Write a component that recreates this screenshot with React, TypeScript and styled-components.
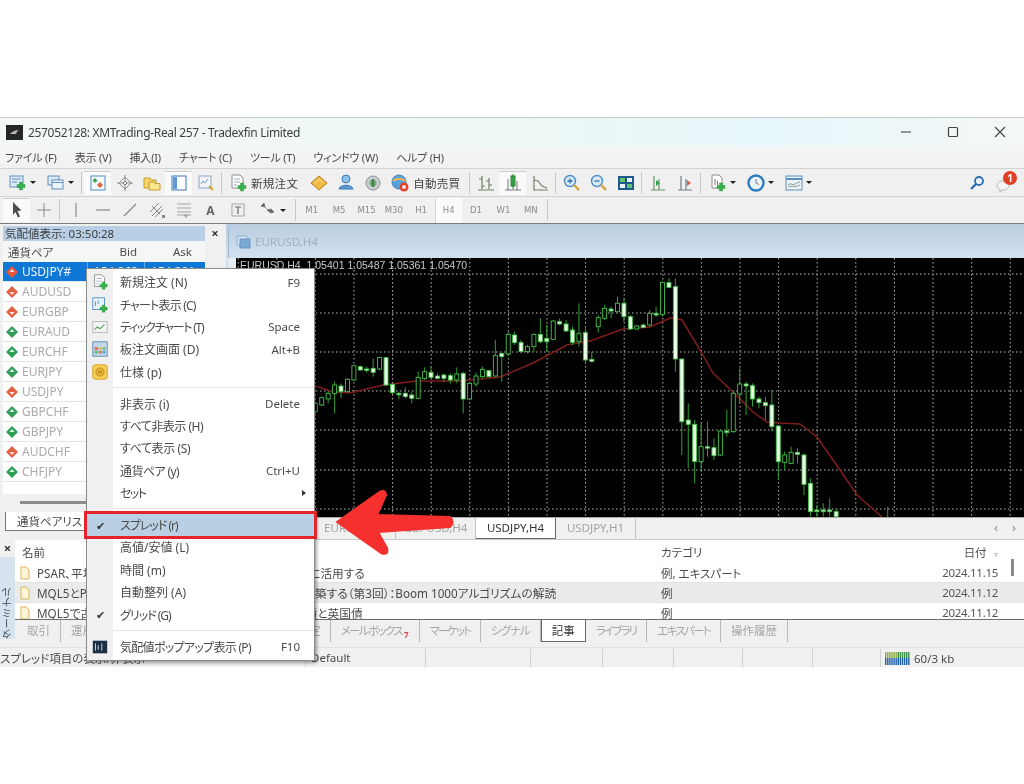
import React from "react";
import styled, { createGlobalStyle } from "styled-components";

const GlobalStyle = createGlobalStyle`
  html, body {
    margin: 0;
    padding: 0;
    background: #ffffff;
  }
  * {
    box-sizing: border-box;
  }
`;

const FONT = `"Noto Sans", "Noto Sans CJK JP", sans-serif`;

// [bodyTop, bodyBottom, wickTop, wickBottom, filled], y measured at 3x from y=250
const CANDLES: [number, number, number, number, number][] = [
  [460, 485, 455, 495, 0], [443, 465, 440, 468, 0], [430, 447, 425, 460, 0], [405, 430, 395, 490, 0],
  [408, 425, 400, 445, 1], [388, 425, 385, 428, 0], [347, 390, 345, 392, 0], [350, 360, 347, 362, 1],
  [357, 360, 350, 368, 1], [355, 367, 325, 380, 1], [322, 357, 320, 360, 0], [323, 405, 321, 408, 1],
  [403, 428, 400, 432, 1], [430, 433, 425, 448, 1], [430, 440, 412, 445, 1], [435, 445, 425, 460, 1],
  [382, 445, 365, 448, 0], [365, 385, 352, 390, 0], [367, 382, 350, 385, 1], [378, 385, 370, 388, 1],
  [375, 385, 370, 395, 1], [377, 390, 370, 400, 1], [372, 390, 352, 400, 0], [370, 447, 365, 490, 1],
  [400, 447, 398, 450, 0], [378, 402, 368, 410, 0], [358, 380, 350, 385, 0], [362, 380, 360, 382, 1],
  [317, 378, 270, 380, 0], [310, 320, 310, 395, 1], [253, 312, 245, 318, 0], [255, 278, 245, 285, 1],
  [277, 305, 270, 310, 1], [290, 305, 285, 310, 0], [253, 290, 250, 305, 0], [253, 275, 205, 280, 1],
  [265, 275, 225, 305, 1], [213, 268, 210, 270, 0], [215, 222, 205, 225, 1], [222, 243, 210, 245, 1],
  [240, 277, 230, 285, 1], [250, 275, 160, 290, 0], [248, 330, 235, 335, 1], [328, 334, 305, 338, 1],
  [203, 230, 195, 248, 0], [175, 205, 165, 210, 0], [177, 183, 170, 205, 1], [160, 185, 140, 190, 0],
  [160, 200, 145, 215, 1], [200, 237, 195, 240, 1], [228, 237, 225, 240, 0], [225, 232, 220, 235, 1],
  [190, 225, 180, 230, 0], [190, 195, 170, 200, 1], [97, 193, 95, 200, 0], [98, 112, 85, 112, 1],
  [110, 327, 85, 365, 1], [327, 515, 327, 615, 1], [510, 523, 460, 655, 1], [523, 635, 510, 700, 1],
  [590, 635, 520, 660, 0], [590, 594, 515, 620, 1], [593, 617, 565, 630, 1], [543, 615, 541, 618, 0],
  [543, 546, 480, 560, 1], [430, 545, 420, 548, 0], [402, 432, 355, 460, 0], [402, 408, 395, 495, 1],
  [407, 447, 400, 470, 1], [447, 458, 440, 475, 1], [458, 467, 440, 510, 1], [465, 530, 420, 545, 1],
  [528, 635, 525, 690, 1], [615, 637, 605, 660, 0], [607, 640, 590, 642, 0], [607, 613, 595, 640, 1],
  [615, 703, 610, 735, 1], [700, 785, 685, 800, 1], [780, 785, 765, 800, 1], [780, 785, 760, 800, 1],
  [780, 785, 745, 800, 1], [785, 800, 775, 800, 1],
];

const MA_LINE =
  "M313 385 L333 392 L350 393 L383 385 L417 381 L460 381 L500 377 L533 363 L567 345 L590 341 L623 329 L650 327 L670 318 L675 318 L682 320 L700 350 L713 373 L733 392 L753 412 L767 422 L780 423 L800 424 L817 437 L840 470 L857 495 L882 517";

const chartY = (v: number) => 250 + v / 3;

const PriceChart = () => (
  <ChartSvg viewBox="236 258 788 259">
    <rect x="236" y="258" width="788" height="259" fill="#000" />
    {Array.from({ length: 21 }, (_, i) => (
      <line key={i} x1={238.2 + i * 38.6} x2={238.2 + i * 38.6} y1="258" y2="517" stroke="#b9b9b9" strokeWidth="1" strokeDasharray="1.5 2.5" />
    ))}
    {[274, 313, 352, 391, 430, 470, 509].map((y) => (
      <line key={y} x1="236" x2="1024" y1={y} y2={y} stroke="#b9b9b9" strokeWidth="1" strokeDasharray="1.5 2.5" />
    ))}
    <path d={MA_LINE} fill="none" stroke="#7f1d1d" strokeWidth="1.5" />
    {CANDLES.map(([top, bottom, wickTop, wickBottom, filled], i) => {
      const x = 315.3 + i * 6.43;
      return (
        <g key={i}>
          <line x1={x} x2={x} y1={chartY(wickTop)} y2={chartY(wickBottom)} stroke="#2f9e33" strokeWidth="1" />
          <rect
            x={x - 2}
            y={chartY(top)}
            width="4"
            height={Math.max(1.5, (bottom - top) / 3)}
            fill={filled ? "#e9ffe6" : "#000"}
            stroke="#43c24a"
            strokeWidth="0.9"
          />
        </g>
      );
    })}
    <line x1="887.7" x2="887.7" y1="507" y2="517" stroke="#2f9e33" strokeWidth="1" />
  </ChartSvg>
);

const Svg = ({ children, size = 20 }: { children: React.ReactNode; size?: number }) => (
  <svg width={size} height={size} viewBox="0 0 20 20">
    {children}
  </svg>
);

const Plus = ({ x = 12, y = 13 }: { x?: number; y?: number }) => (
  <path d={`M${x - 1.5} ${y - 4}h3v2.5h2.5v3h-2.5v2.5h-3v-2.5h-2.5v-3h2.5z`} fill="#35b34a" stroke="#1f8a35" strokeWidth=".4" />
);

const icons: Record<string, React.ReactNode> = {
  newChart: (
    <>
      <rect x="2" y="3" width="13" height="11" fill="#dce9f6" stroke="#5f8fbd" />
      <path d="M4 6h9M4 9h5" stroke="#5f8fbd" />
      <Plus x={13} y={13} />
    </>
  ),
  profile: (
    <>
      <rect x="2" y="3" width="11" height="9" fill="#dce9f6" stroke="#5f8fbd" />
      <rect x="6" y="7" width="11" height="9" fill="#eef4fb" stroke="#5f8fbd" />
      <path d="M6 9.5h11" stroke="#5f8fbd" />
    </>
  ),
  watch: (
    <>
      <rect x="3" y="3" width="14" height="14" fill="#f5f9fd" stroke="#4d8dc4" />
      <path d="M7 5l2.5 2.5L7 10 4.5 7.5z" fill="#3aa655" />
      <path d="M12 9l3 3-3 3-3-3z" fill="#e0663a" />
    </>
  ),
  navigator: (
    <>
      <path d="M10 4l6 6-6 6-6-6z" fill="#f4f4f4" stroke="#8a8a8a" />
      <path d="M10 2v16M2 10h16" stroke="#8a8a8a" />
      <circle cx="10" cy="10" r="1.6" fill="#fff" stroke="#777" />
    </>
  ),
  folders: (
    <>
      <path d="M2 5h6l1 2h5v8H2z" fill="#f6d66b" stroke="#c79a2c" />
      <path d="M7 9h5l1 1.5h5V17H7z" fill="#fbe58d" stroke="#c79a2c" />
    </>
  ),
  panel: (
    <>
      <rect x="3" y="3" width="14" height="14" fill="#fff" stroke="#3a78b5" />
      <rect x="4" y="4" width="4" height="12" fill="#5b9bd5" />
    </>
  ),
  tester: (
    <>
      <rect x="3" y="3" width="12" height="12" fill="#f1f5f9" stroke="#8ea6bd" />
      <path d="M5 11l2-3 2 2 3-4" fill="none" stroke="#6b9ac4" />
      <path d="M13 13l4 4" stroke="#d8a23a" strokeWidth="2" />
    </>
  ),
  order: (
    <>
      <path d="M4 2h8l3 3v10H4z" fill="#fff" stroke="#8c8c8c" />
      <path d="M6 6h6M6 9h6M6 12h3" stroke="#9ab" />
      <Plus x={14} y={14} />
    </>
  ),
  gem: (
    <>
      <path d="M10 3l8 7-8 7-8-7z" fill="#f0b93f" stroke="#b97a1e" />
      <path d="M6 10l4-3.5 4 3.5" fill="none" stroke="#ffe9a8" />
    </>
  ),
  person: (
    <>
      <circle cx="10" cy="6" r="4" fill="#8cc0ea" stroke="#3a78b5" />
      <path d="M3 16c1-5 13-5 14 0z" fill="#5b9bd5" stroke="#3a78b5" />
    </>
  ),
  globe: (
    <>
      <circle cx="10" cy="10" r="7" fill="#c9ced3" stroke="#8b9298" />
      <circle cx="10" cy="10" r="3.5" fill="#73a874" />
      <path d="M10 6v8" stroke="#2f6f3a" strokeWidth="1.5" />
    </>
  ),
  auto: (
    <>
      <circle cx="9" cy="9" r="7" fill="#58a3dd" stroke="#3b7fb5" />
      <path d="M3 8c4-3 9-3 12 0" fill="none" stroke="#f2b552" strokeWidth="2" />
      <circle cx="14" cy="14" r="4.5" fill="#e2462f" />
      <rect x="12.4" y="12.4" width="3.2" height="3.2" fill="#fff" />
    </>
  ),
  bars: (
    <path d="M6 3v13M3 6h3M6 13h3M13 5v11M10 8h3M13 12h3M2 17h16" fill="none" stroke="#6f7f5f" strokeWidth="1.2" />
  ),
  candle: (
    <>
      <path d="M2 17h16M5 6v11M14 8v9" stroke="#777" />
      <rect x="8" y="3" width="4" height="10" fill="#4cc25a" stroke="#247a30" />
      <path d="M10 1v15" stroke="#247a30" />
    </>
  ),
  line: <path d="M4 3v14h14M4 7l4 1 4 5 5 2" fill="none" stroke="#7b7b6a" strokeWidth="1.2" />,
  zoomIn: (
    <>
      <circle cx="8" cy="8" r="5.5" fill="#d7e9f8" stroke="#4d8dc4" strokeWidth="1.4" />
      <path d="M5.5 8h5M8 5.5v5" stroke="#2f6fa8" strokeWidth="1.3" />
      <path d="M12 12l5 5" stroke="#d8a23a" strokeWidth="2.4" />
    </>
  ),
  zoomOut: (
    <>
      <circle cx="8" cy="8" r="5.5" fill="#d7e9f8" stroke="#4d8dc4" strokeWidth="1.4" />
      <path d="M5.5 8h5" stroke="#2f6fa8" strokeWidth="1.3" />
      <path d="M12 12l5 5" stroke="#d8a23a" strokeWidth="2.4" />
    </>
  ),
  tile: (
    <>
      <rect x="2" y="3" width="16" height="14" fill="#1d5a8a" />
      <rect x="4" y="5" width="5" height="4" fill="#5fc46f" />
      <rect x="11" y="5" width="5" height="4" fill="#eaf3fb" />
      <rect x="4" y="11" width="5" height="4" fill="#eaf3fb" />
      <rect x="11" y="11" width="5" height="4" fill="#5fc46f" />
    </>
  ),
  shiftEnd: (
    <>
      <path d="M3 17h14M6 3v14M11 6v11" stroke="#6f8f6f" strokeWidth="1.2" />
      <path d="M8 7l4 3-4 3z" fill="#2f9e44" />
    </>
  ),
  shiftRed: (
    <>
      <path d="M3 17h14M6 3v14M11 6v11" stroke="#6f7f8f" strokeWidth="1.2" />
      <path d="M12 7l4 3-4 3z" fill="#d8604a" />
    </>
  ),
  indicator: (
    <>
      <path d="M4 2h7l3 3v10H4z" fill="#fff" stroke="#8c8c8c" />
      <path d="M7 6v6M9.5 8v4" stroke="#777" />
      <Plus x={13} y={14} />
    </>
  ),
  clock: (
    <>
      <circle cx="10" cy="10" r="7.5" fill="#eaf3fb" stroke="#2f7dbd" strokeWidth="2.4" />
      <path d="M10 6v4l3 1.5" fill="none" stroke="#777" />
    </>
  ),
  template: (
    <>
      <rect x="2" y="3" width="16" height="14" fill="#eaf3fb" stroke="#5f8fbd" />
      <path d="M2 6h16" stroke="#5f8fbd" strokeWidth="2" />
      <path d="M4 12c3-3 4 1 7-1s3-1 5-2M4 14c4-2 7 1 12-2" fill="none" stroke="#8a9a8a" />
    </>
  ),
  cursor: <path d="M6 2l8.5 8.5-4 .5 2.5 5.5-2.2 1L8.5 12l-2.5 3z" fill="#4d4d4d" />,
  cross: <path d="M10 3v14M3 10h14" stroke="#8a8a8a" strokeWidth="1" />,
  vline: <path d="M10 3v14" stroke="#8a8a8a" strokeWidth="1.2" />,
  hline: <path d="M3 10h14" stroke="#8a8a8a" strokeWidth="1.2" />,
  trend: <path d="M4 16L16 4" stroke="#8a8a8a" strokeWidth="1.2" />,
  channel: (
    <>
      <path d="M3 12l9-9M5 16l10-10M8 17l8-8M5 6l8 8" stroke="#888" strokeWidth="1" />
      <path d="M15 15h3v3h-3z" fill="#888" />
    </>
  ),
  fibo: <path d="M3 4h14M3 8h14M3 12h14M3 15h14M10 15l2 2.5 2-2.5z" stroke="#a5a5a5" fill="#a5a5a5" strokeWidth="1" />,
  textBox: (
    <>
      <rect x="4" y="4" width="12" height="12" fill="none" stroke="#a5a5a5" />
      <path d="M7 7h6M10 7v7" stroke="#666" strokeWidth="1.2" />
    </>
  ),
  arrows: <path d="M3 6l4 1-1-4zM9 10l4 3 3-1-3-3zM6 6l3 3" fill="#666" stroke="#666" strokeWidth=".7" />,
};

const menuIcons: Record<string, React.ReactNode> = {
  order: icons.order,
  chart: (
    <>
      <rect x="2" y="2" width="13" height="13" fill="#eaf3fb" stroke="#4d8dc4" />
      <path d="M5 6v5M8 5v4" stroke="#4d8dc4" />
      <Plus x={14} y={14} />
    </>
  ),
  tick: (
    <>
      <rect x="2" y="4" width="16" height="12" fill="#f3f3f3" stroke="#b5b5b5" />
      <path d="M4 13l3-3 3 2 5-5" fill="none" stroke="#5aa364" strokeWidth="1.2" />
    </>
  ),
  depth: (
    <>
      <rect x="2" y="2" width="16" height="16" fill="#c4d7ea" stroke="#5b86ad" />
      <path d="M4 8h4v3H4z" fill="#e06b4a" />
      <path d="M9 8h3v3H9z" fill="#f0b93f" />
      <path d="M13 8h3v3h-3z" fill="#6fba6f" />
      <path d="M4 12h4v3H4z" fill="#6fba6f" />
      <path d="M9 12h3v3H9z" fill="#e06b4a" />
      <path d="M13 12h3v3h-3z" fill="#5b9bd5" />
    </>
  ),
  spec: (
    <>
      <rect x="2" y="2" width="16" height="16" rx="3" fill="#f6cf55" stroke="#d09a22" />
      <circle cx="10" cy="10" r="4.5" fill="#eab93a" stroke="#b98a20" />
      <path d="M7.5 9h5M7.5 11h5" stroke="#a87a18" />
    </>
  ),
  popup: (
    <>
      <rect x="2" y="3" width="16" height="14" fill="#1c2f45" />
      <path d="M5 6v8M8 8v5M12 6v8" stroke="#d9e6f2" />
    </>
  ),
};

type MenuEntry = {
  icon?: string;
  label?: string;
  shortcut?: string;
  checked?: boolean;
  more?: boolean;
  active?: boolean;
  tight?: number;
};

const MENU: MenuEntry[] = [
  { icon: "order", label: "新規注文 (N)", shortcut: "F9" },
  { icon: "chart", label: "チャート表示 (C)", tight: 0.8 },
  { icon: "tick", label: "ティックチャート (T)", shortcut: "Space", tight: 1.25 },
  { icon: "depth", label: "板注文画面 (D)", shortcut: "Alt+B" },
  { icon: "spec", label: "仕様 (p)" },
  {},
  { label: "非表示 (i)", shortcut: "Delete" },
  { label: "すべて非表示 (H)", tight: 0.5 },
  { label: "すべて表示 (S)", tight: 0.4 },
  { label: "通貨ペア (y)", shortcut: "Ctrl+U", tight: 0.6 },
  { label: "セット", more: true, tight: 1.6 },
  {},
  { label: "スプレッド (r)", checked: true, active: true, tight: 1 },
  { label: "高値/安値 (L)" },
  { label: "時間 (m)" },
  { label: "自動整列 (A)" },
  { label: "グリッド (G)", checked: true, tight: 1 },
  {},
  { icon: "popup", label: "気配値ポップアップ表示 (P)", shortcut: "F10", tight: 0.7 },
];

const PAIRS: [string, boolean][] = [
  ["AUDUSD", false],
  ["EURGBP", false],
  ["EURAUD", true],
  ["EURCHF", true],
  ["EURJPY", true],
  ["USDJPY", false],
  ["GBPCHF", true],
  ["GBPJPY", true],
  ["AUDCHF", false],
  ["CHFJPY", true],
];

const TERMINAL_TABS: { label: string; tight?: number; active?: boolean; mail?: boolean }[] = [
  { label: "取引" },
  { label: "運用比率" },
  { label: "口座履歴" },
  { label: "ニュース", tight: 1.8 },
  { label: "アラーム設定", tight: 1 },
  { label: "メールボックス", tight: 1.6, mail: true },
  { label: "マーケット", tight: 2 },
  { label: "シグナル", tight: 1 },
  { label: "記事", active: true },
  { label: "ライブラリ", tight: 1.8 },
  { label: "エキスパート", tight: 1.7 },
  { label: "操作履歴" },
];

const PairIcon = ({ up, light }: { up: boolean; light?: boolean }) => (
  <svg width="14" height="14" viewBox="0 0 14 14">
    <path d="M7 1l6 6-6 6-6-6z" fill={light ? "#e8543a" : up ? "#2f9e55" : "#e2603f"} />
    <path d={up ? "M7 4l2.5 3h-5z" : "M7 10L4.5 7h5z"} fill="#fff" opacity=".85" />
  </svg>
);

const Tool = ({ name, on, wide, drop }: { name: string; on?: boolean; wide?: string; drop?: boolean }) => (
  <ToolButton $on={on} $wide={wide}>
    <Svg>{icons[name]}</Svg>
    {drop && <Caret />}
  </ToolButton>
);

const Article = ({ name, category, date, odd }: { name: string; category: string; date: string; odd?: boolean }) => (
  <ArticleRow $odd={odd}>
    <ArticleName>
      <svg width="10" height="14" viewBox="0 0 10 14">
        <path d="M1 1h5l3 3v9H1z" fill="#fff6d5" stroke="#d8b45a" />
      </svg>
      {name}
    </ArticleName>
    <span>{category}</span>
    <ArticleDate>{date}</ArticleDate>
  </ArticleRow>
);

const TIMEFRAMES = ["M1", "M5", "M15", "M30", "H1", "H4", "D1", "W1", "MN"];
const STATUS_WIDTHS = [120, 105, 72, 71, 69, 70, 68];

export default function App() {
  return (
    <Page>
      <GlobalStyle />
      <Window>
        <TitleBar>
          <svg width="17" height="15" viewBox="0 0 17 15">
            <rect width="17" height="15" fill="#262626" />
            <path d="M4 9c3-3 5-4 9-4-2 1-2 2-3 4z" fill="#b5b5b5" />
          </svg>
          <TitleText>257052128: XMTrading-Real 257 - Tradexfin Limited</TitleText>
          <WindowControls>
            <svg width="12" height="12" viewBox="0 0 12 12">
              <path d="M1 6h10" stroke="#555" strokeWidth="1.2" />
            </svg>
            <svg width="12" height="12" viewBox="0 0 12 12">
              <rect x="1.5" y="1.5" width="9" height="9" rx="1" fill="none" stroke="#444" strokeWidth="1.2" />
            </svg>
            <svg width="12" height="12" viewBox="0 0 12 12">
              <path d="M1 1l10 10M11 1L1 11" stroke="#444" strokeWidth="1.2" />
            </svg>
          </WindowControls>
        </TitleBar>

        <MenuBar>
          <span>ファイル (F)</span>
          <span>表示 (V)</span>
          <span>挿入(I)</span>
          <span>チャート (C)</span>
          <span>ツール (T)</span>
          <span>ウィンドウ (W)</span>
          <span>ヘルプ (H)</span>
        </MenuBar>

        <ToolBar $height={28}>
          <Tool name="newChart" wide="38px" drop />
          <Tool name="profile" wide="38px" drop />
          <ToolSep />
          <Tool name="watch" on />
          <Tool name="navigator" />
          <Tool name="folders" />
          <Tool name="panel" on />
          <Tool name="tester" />
          <ToolSep />
          <LabelTool>
            <Svg>{icons.order}</Svg>
            新規注文
          </LabelTool>
          <Tool name="gem" />
          <Tool name="person" />
          <Tool name="globe" />
          <LabelTool>
            <Svg>{icons.auto}</Svg>
            自動売買
          </LabelTool>
          <ToolSep />
          <Tool name="bars" />
          <Tool name="candle" on />
          <Tool name="line" />
          <ToolSep />
          <Tool name="zoomIn" />
          <Tool name="zoomOut" />
          <Tool name="tile" />
          <ToolSep />
          <Tool name="shiftEnd" />
          <Tool name="shiftRed" />
          <ToolSep />
          <Tool name="indicator" wide="38px" drop />
          <Tool name="clock" wide="38px" drop />
          <Tool name="template" wide="38px" drop />
          <ToolEnd>
            <svg width="16" height="16" viewBox="0 0 16 16">
              <circle cx="10" cy="6" r="4" fill="#e8f1f9" stroke="#2f6fb0" strokeWidth="1.8" />
              <path d="M7 9l-5 5" stroke="#2f6fb0" strokeWidth="2.4" />
            </svg>
            <NoticeIcon>
              <svg width="14" height="14" viewBox="0 0 14 14">
                <path d="M7 2c3.5 0 6 2 6 4.5S10.5 11 7 11H5.5L4 13.5V10.5C2 9.5 1 8 1 6.5 1 4 3.5 2 7 2z" fill="#f4f4f4" stroke="#b5b5b5" />
              </svg>
              <Badge>1</Badge>
            </NoticeIcon>
          </ToolEnd>
        </ToolBar>

        <ToolBar $height={27}>
          <Tool name="cursor" on />
          <Tool name="cross" />
          <ToolSep />
          <Tool name="vline" />
          <Tool name="hline" />
          <Tool name="trend" />
          <Tool name="channel" />
          <Tool name="fibo" />
          <TextTool>A</TextTool>
          <Tool name="textBox" />
          <Tool name="arrows" wide="42px" drop />
          <ToolSep />
          {TIMEFRAMES.map((t) => (
            <Period key={t} $on={t === "H4"}>
              {t}
            </Period>
          ))}
          <ToolSep />
        </ToolBar>

        <Main>
          <WatchPanel>
            <WatchTitleRow>
              <WatchTitle>気配値表示: 03:50:28</WatchTitle>
              <CloseMark>×</CloseMark>
            </WatchTitleRow>
            <WatchList>
              <WatchHead>
                <span>通貨ペア</span>
                <RightCell>Bid</RightCell>
                <RightCell>Ask</RightCell>
              </WatchHead>
              <WatchRow $selected>
                <PairIcon up light />
                USDJPY#
                <SelectedQuote>154.263</SelectedQuote>
                <SelectedQuote>154.281</SelectedQuote>
              </WatchRow>
              {PAIRS.map(([pair, up]) => (
                <WatchRow key={pair}>
                  <PairIcon up={up} />
                  {pair}
                </WatchRow>
              ))}
            </WatchList>
            <WatchScroll>
              <WatchThumb />
            </WatchScroll>
            <WatchTabs>
              <WatchTab>通貨ペアリスト</WatchTab>
            </WatchTabs>
          </WatchPanel>

          <ChartArea>
            <ChartWindowTitle>
              <svg width="15" height="14" viewBox="0 0 15 14">
                <rect x="1" y="1" width="10" height="9" fill="#d5e4f2" stroke="#8db1d4" />
                <rect x="4" y="4" width="10" height="9" fill="#7ca9d4" stroke="#6a97c4" />
              </svg>
              EURUSD,H4
            </ChartWindowTitle>
            <ChartCanvas>
              <PriceChart />
              <ChartLabel>EURUSD,H4&nbsp; 1.05401 1.05487 1.05361 1.05470</ChartLabel>
            </ChartCanvas>
            <ChartTabs>
              <ChartTab>USDCHF,H4</ChartTab>
              <ChartTab>EURUSD,H4</ChartTab>
              <ChartTab>GBPUSD,H4</ChartTab>
              <ChartTab $active>USDJPY,H4</ChartTab>
              <ChartTab>USDJPY,H1</ChartTab>
              <TabScroll>
                <span>‹</span>
                <span>›</span>
              </TabScroll>
            </ChartTabs>
          </ChartArea>
        </Main>

        <Terminal>
          <TerminalSide>
            <CloseMark>×</CloseMark>
            <SideLabel>ターミナル</SideLabel>
          </TerminalSide>
          <TerminalBody>
            <ArticleTable>
              <ArticleHead>
                <ArticleHeadName>名前</ArticleHeadName>
                <span>カテゴリ</span>
                <ArticleDate>日付 &nbsp;&nbsp;<SortMark>▿</SortMark></ArticleDate>
              </ArticleHead>
              <Article name="PSAR、平均足、ディープラーニングを組み合わせた取引に活用する" category="例, エキスパート" date="2024.11.15" />
              <Article name="MQL5とPythonで最適化エキスパートアドバイザーを構築する（第3回）：Boom 1000アルゴリズムの解読" category="例" date="2024.11.12" odd />
              <Article name="MQL5で古典的な戦略を再構築する（第2回）：金、米国債と英国債" category="例" date="2024.11.12" />
              <ScrollThumb />
            </ArticleTable>
            <TerminalTabs>
              {TERMINAL_TABS.map((t) => (
                <TerminalTab key={t.label} $active={t.active} $tight={t.tight}>
                  {t.label}
                  {t.mail && <MailCount>7</MailCount>}
                </TerminalTab>
              ))}
            </TerminalTabs>
          </TerminalBody>
        </Terminal>

        <StatusBar>
          <StatusHelp>スプレッド項目の表示/非表示</StatusHelp>
          <StatusCell $width={STATUS_WIDTHS[0]}>Default</StatusCell>
          {STATUS_WIDTHS.slice(1).map((w, i) => (
            <StatusCell key={i} $width={w} />
          ))}
          <StatusTraffic>
            <svg width="25" height="13" viewBox="0 0 25 13">
              {Array.from({ length: 12 }, (_, i) => (
                <g key={i}>
                  <rect x={i * 2.1} y="0" width="1.4" height="6" fill={i < 6 ? "#8fa83a" : "#3f8f4a"} />
                  <rect x={i * 2.1} y="6" width="1.4" height="7" fill="#1f5fa8" />
                </g>
              ))}
            </svg>
            60/3 kb
          </StatusTraffic>
        </StatusBar>

        <ContextMenu>
          {MENU.map((item, i) =>
            item.label ? (
              <MenuRow key={i} $active={item.active}>
                <MenuGutter>
                  {item.icon && <Svg size={18}>{menuIcons[item.icon]}</Svg>}
                  {item.checked && <CheckMark>✔</CheckMark>}
                </MenuGutter>
                <MenuLabel $tight={item.tight}>{item.label}</MenuLabel>
                <MenuShortcut>{item.shortcut}</MenuShortcut>
                {item.more && <MoreMark />}
              </MenuRow>
            ) : (
              <MenuSeparator key={i} />
            )
          )}
        </ContextMenu>

        <RedArrow viewBox="0 0 130 75">
          <path
            d="M6 37 L47 8 Q54 3 55 10 L46 30 L119 32 Q124 37 119 42 L47 47 L56 63 Q58 71 50 68 Z"
            fill="#f5302e"
            stroke="#f5302e"
            strokeWidth="2"
            strokeLinejoin="round"
          />
        </RedArrow>
      </Window>
    </Page>
  );
}

const Page = styled.div`
  height: 784px;
  padding-top: 117px;
  background: #ffffff;
  overflow: hidden;
  font-family: ${FONT};
  font-feature-settings: "palt";
`;

const Window = styled.div`
  position: relative;
  height: 550px;
  display: flex;
  flex-direction: column;
  background: #f0f0f0;
  border-top: 1px solid #c8ccc9;
  color: #4a4a4a;
  font-size: 12px;
  overflow: hidden;
  filter: blur(0.35px);
`;

const TitleBar = styled.div`
  height: 28px;
  display: flex;
  align-items: center;
  padding-left: 6px;
  background: linear-gradient(90deg, #f3f8f5, #eff8f3 40%, #e7f6fa 75%, #f3f8f6);
`;

const TitleText = styled.span`
  margin-left: 5px;
  font-size: 12px;
  letter-spacing: -0.33px;
  color: #3f3f3f;
`;

const WindowControls = styled.div`
  margin-left: auto;
  display: flex;
  gap: 35px;
  padding-right: 18px;
`;

const MenuBar = styled.div`
  height: 22px;
  display: flex;
  align-items: center;
  gap: 18px;
  padding-left: 5px;
  font-size: 11px;
  letter-spacing: -0.2px;
  background: linear-gradient(#f4f6f5, #f1f1f1);
`;

const ToolBar = styled.div<{ $height: number }>`
  height: ${(p) => p.$height}px;
  display: flex;
  align-items: center;
  padding-left: 3px;
  background: #f0f0f0;
  border-top: 1px solid #d2d2d2;
`;

const ToolButton = styled.div<{ $on?: boolean; $wide?: string }>`
  width: ${(p) => p.$wide ?? "27px"};
  height: 24px;
  display: flex;
  align-items: center;
  justify-content: center;
  gap: 2px;
  background: ${(p) => (p.$on ? "#fafafa" : "transparent")};
  box-shadow: ${(p) => (p.$on ? "inset 0 1px 0 #cfcfcf" : "none")};
  flex-shrink: 0;
`;

const Caret = styled.span`
  width: 0;
  height: 0;
  border-left: 3px solid transparent;
  border-right: 3px solid transparent;
  border-top: 3px solid #222;
`;

const ToolSep = styled.span`
  width: 1px;
  height: 22px;
  margin: 0 2px;
  background: #c9c9c9;
  flex-shrink: 0;
`;

const LabelTool = styled.div`
  display: flex;
  align-items: center;
  gap: 3px;
  height: 24px;
  margin-left: 2px;
  padding: 0 7px 0 2px;
  font-size: 11.5px;
  letter-spacing: 0.3px;
  color: #444;
  flex-shrink: 0;
`;

const TextTool = styled.div`
  width: 27px;
  text-align: center;
  font-size: 12px;
  font-weight: 700;
  color: #666;
  flex-shrink: 0;
`;

const Period = styled.div<{ $on?: boolean }>`
  width: 27.4px;
  height: 25px;
  line-height: 25px;
  text-align: center;
  font-family: "DejaVu Sans", sans-serif;
  font-size: 8.5px;
  color: #8b8b8b;
  background: ${(p) => (p.$on ? "#fafafa" : "transparent")};
  box-shadow: ${(p) => (p.$on ? "inset 1px 0 0 #d6d6d6" : "none")};
  flex-shrink: 0;
`;

const ToolEnd = styled.div`
  margin-left: auto;
  display: flex;
  align-items: center;
  gap: 11px;
  padding-right: 8px;
`;

const NoticeIcon = styled.div`
  position: relative;
  width: 20px;
  height: 20px;
  display: flex;
  align-items: flex-end;
`;

const Badge = styled.span`
  position: absolute;
  top: -2px;
  right: -1px;
  width: 14px;
  height: 14px;
  border-radius: 50%;
  background: #df3f24;
  color: #ffffff;
  font-size: 10px;
  font-weight: 700;
  line-height: 14px;
  text-align: center;
`;

const Main = styled.div`
  height: 317px;
  display: flex;
  border-top: 1px solid #7c7c7c;
`;

const WatchPanel = styled.div`
  width: 226px;
  display: flex;
  flex-direction: column;
  padding-left: 3px;
  background: #f0f0f0;
`;

const WatchTitleRow = styled.div`
  height: 16px;
  margin-top: 1px;
  display: flex;
  align-items: center;
`;

const WatchTitle = styled.div`
  width: 202px;
  height: 15px;
  line-height: 15px;
  padding-left: 2px;
  font-size: 11.5px;
  background: #b9cfe5;
  color: #3d3d3d;
`;

const CloseMark = styled.span`
  width: 20px;
  text-align: center;
  font-size: 13px;
  font-weight: 700;
  line-height: 12px;
  color: #333;
`;

const WatchList = styled.div`
  width: 202px;
  height: 242px;
  background: #ffffff;
`;

const WatchHead = styled.div`
  height: 21px;
  display: grid;
  grid-template-columns: 83px 46px 55px;
  align-items: center;
  padding-left: 5px;
  background: #f6f6f6;
  font-size: 11.5px;
`;

const RightCell = styled.span`
  text-align: right;
`;

const WatchRow = styled.div<{ $selected?: boolean }>`
  height: 20px;
  display: flex;
  align-items: center;
  gap: 3px;
  padding-left: 2px;
  border-bottom: 1px solid #e4e4e4;
  font-size: 12px;
  background: ${(p) => (p.$selected ? "#0f78d6" : "#ffffff")};
  color: ${(p) => (p.$selected ? "#eaf4ff" : "#ababab")};
`;

const SelectedQuote = styled.span`
  width: 54px;
  height: 100%;
  line-height: 19px;
  text-align: right;
  padding-right: 3px;
  border-left: 1px solid #5fa9e8;
  &:nth-of-type(1) {
    margin-left: 13px;
  }
`;

const WatchScroll = styled.div`
  height: 29px;
  width: 202px;
  padding: 18px 6px 0 17px;
  background: linear-gradient(#ffffff 38%, #f0f0f0 38%);
`;

const WatchThumb = styled.div`
  width: 100%;
  height: 3px;
  background: #8d8d8d;
`;

const WatchTabs = styled.div`
  height: 22px;
  padding-left: 2px;
`;

const WatchTab = styled.div`
  width: 100px;
  height: 19px;
  line-height: 19px;
  padding-left: 11px;
  background: #ffffff;
  border-left: 1px solid #777;
  border-bottom: 1px solid #777;
  font-size: 11.5px;
  white-space: nowrap;
`;

const ChartArea = styled.div`
  flex: 1;
  display: flex;
  flex-direction: column;
  background: linear-gradient(#b9cde0, #cfdfee 30px);
`;

const ChartWindowTitle = styled.div`
  height: 33px;
  margin-left: 2px;
  margin-top: 1px;
  display: flex;
  align-items: center;
  gap: 4px;
  padding-left: 7px;
  border-left: 1px solid #a5b7c9;
  border-top-left-radius: 5px;
  font-size: 11.5px;
  color: #9fb0c1;
`;

const ChartCanvas = styled.div`
  position: relative;
  height: 259px;
  margin-left: 2px;
  padding-left: 8px;
  background: #e9eef3;
`;

const ChartSvg = styled.svg`
  display: block;
  width: 788px;
  height: 259px;
`;

const ChartLabel = styled.div`
  position: absolute;
  left: 12px;
  top: 1px;
  font-family: "Liberation Sans", sans-serif;
  font-size: 10.5px;
  color: #c9c9c9;
  white-space: nowrap;
`;

const ChartTabs = styled.div`
  height: 23px;
  display: flex;
  padding-left: 10px;
  background: #f0f0f0;
  border-top: 1px solid #a9a9a9;
  border-bottom: 1px solid #c9c9c9;
`;

const ChartTab = styled.div<{ $active?: boolean }>`
  width: 80px;
  text-align: center;
  line-height: 20px;
  font-size: 11.5px;
  color: ${(p) => (p.$active ? "#333" : "#a3a3a3")};
  background: ${(p) => (p.$active ? "#ffffff" : "transparent")};
  border-right: 1px solid ${(p) => (p.$active ? "#666" : "#c2c2c2")};
  border-bottom: ${(p) => (p.$active ? "1px solid #666" : "none")};
`;

const TabScroll = styled.div`
  margin-left: auto;
  display: flex;
  gap: 14px;
  padding-right: 8px;
  font-size: 13px;
  line-height: 19px;
  color: #8a8a8a;
`;

const Terminal = styled.div`
  height: 107px;
  display: flex;
  background: #f0f0f0;
`;

const TerminalSide = styled.div`
  width: 15px;
  display: flex;
  flex-direction: column;
  align-items: center;
  padding-top: 2px;
  gap: 3px;
`;

const SideLabel = styled.div`
  width: 15px;
  height: 82px;
  writing-mode: vertical-rl;
  transform: rotate(180deg);
  background: #d6e3ef;
  font-size: 10.5px;
  line-height: 15px;
  color: #3f4f5f;
`;

const TerminalBody = styled.div`
  flex: 1;
  display: flex;
  flex-direction: column;
  min-width: 0;
`;

const ArticleTable = styled.div`
  position: relative;
  height: 80px;
  padding-top: 1px;
  background: #ffffff;
  overflow: hidden;
  border-bottom: 1px solid #6f6f6f;
`;

const ArticleHead = styled.div`
  height: 22px;
  display: grid;
  grid-template-columns: 646px 262px 75px;
  align-items: center;
  font-size: 11.5px;
`;

const ArticleHeadName = styled.span`
  padding-left: 7px;
`;

const ArticleRow = styled.div<{ $odd?: boolean }>`
  height: 20px;
  display: grid;
  grid-template-columns: 646px 262px 75px;
  align-items: center;
  background: ${(p) => (p.$odd ? "#ebebeb" : "#ffffff")};
  border-bottom: 1px solid #e2e2e2;
  font-size: 11.5px;
`;

const ArticleName = styled.span`
  display: flex;
  align-items: center;
  gap: 7px;
  padding-left: 5px;
  font-size: 11.7px;
  white-space: nowrap;
  overflow: hidden;
`;

const ArticleDate = styled.span`
  text-align: right;
  white-space: nowrap;
  font-size: 11.5px;
  letter-spacing: -0.3px;
  color: #555;
`;

const SortMark = styled.span`
  font-size: 8px;
  color: #999;
`;

const ScrollThumb = styled.div`
  position: absolute;
  right: 10px;
  top: 19px;
  width: 3px;
  height: 17px;
  background: #8a8a8a;
`;

const TerminalTabs = styled.div`
  height: 22px;
  display: flex;
  padding-left: 2px;
`;

const TerminalTab = styled.div<{ $active?: boolean; $tight?: number }>`
  padding: 0 10px;
  line-height: 21px;
  height: 22px;
  font-size: 11.5px;
  letter-spacing: ${(p) => -(p.$tight ?? 0)}px;
  white-space: nowrap;
  color: ${(p) => (p.$active ? "#333" : "#a6a6a6")};
  background: ${(p) => (p.$active ? "#ffffff" : "transparent")};
  border-right: 1px solid ${(p) => (p.$active ? "#666" : "#b9b9b9")};
  border-left: ${(p) => (p.$active ? "1px solid #666" : "none")};
  border-bottom: ${(p) => (p.$active ? "1px solid #666" : "none")};
`;

const MailCount = styled.sub`
  font-size: 8px;
  font-weight: 700;
  letter-spacing: 0;
  margin-left: 2px;
  color: #e0484f;
`;

const StatusBar = styled.div`
  height: 20px;
  display: flex;
  align-items: center;
  padding-top: 1px;
  font-size: 11.5px;
  background: #f0f0f0;
  border-top: 1px solid #e2e2e2;
`;

const StatusHelp = styled.div`
  width: 305px;
  white-space: nowrap;
`;

const StatusCell = styled.div<{ $width: number }>`
  width: ${(p) => p.$width}px;
  height: 18px;
  line-height: 18px;
  padding-left: 5px;
  border-left: 1px solid #cfcfcf;
`;

const StatusTraffic = styled.div`
  display: flex;
  align-items: center;
  gap: 4px;
  height: 18px;
  padding-left: 4px;
  border-left: 1px solid #cfcfcf;
`;

const ContextMenu = styled.div`
  position: absolute;
  left: 86px;
  top: 150px;
  width: 229px;
  padding: 2px 0 2px;
  background: linear-gradient(90deg, #f0f0f0 26px, #ffffff 26px);
  border: 1px solid #8a8a8a;
  box-shadow: 2px 2px 3px rgba(0, 0, 0, 0.35);
  color: #4a4a4a;
`;

const MenuRow = styled.div<{ $active?: boolean }>`
  position: relative;
  height: 22.4px;
  display: flex;
  align-items: center;
  font-size: 12px;
  background: ${(p) => (p.$active ? "#b9d0e4" : "transparent")};
  outline: ${(p) => (p.$active ? "3.5px solid #e3242b" : "none")};
  outline-offset: ${(p) => (p.$active ? "0.5px" : "0")};
`;

const MenuGutter = styled.div`
  width: 26px;
  display: flex;
  justify-content: center;
  flex-shrink: 0;
`;

const CheckMark = styled.span`
  font-size: 11px;
  color: #333;
`;

const MenuLabel = styled.span<{ $tight?: number }>`
  margin-left: 7px;
  letter-spacing: ${(p) => -(p.$tight ?? 0)}px;
  white-space: nowrap;
`;

const MenuShortcut = styled.span`
  margin-left: auto;
  padding-right: 14px;
  font-size: 11.5px;
`;

const MoreMark = styled.span`
  position: absolute;
  right: 8px;
  top: 8px;
  width: 0;
  height: 0;
  border-top: 3px solid transparent;
  border-bottom: 3px solid transparent;
  border-left: 4px solid #333;
`;

const MenuSeparator = styled.div`
  height: 9.5px;
  margin-left: 26px;
  background: linear-gradient(transparent 4px, #e6e6e6 4px, #e6e6e6 5px, transparent 5px);
`;

const RedArrow = styled.svg`
  position: absolute;
  left: 331px;
  top: 367px;
  width: 130px;
  height: 75px;
`;
